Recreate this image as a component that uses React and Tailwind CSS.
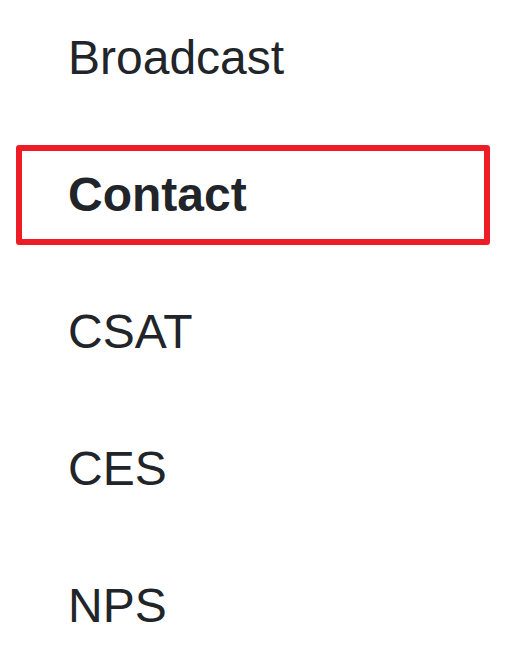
import React from "react";

const items = [
  { label: "Broadcast", active: false },
  { label: "Contact", active: true },
  { label: "CSAT", active: false },
  { label: "CES", active: false },
  { label: "NPS", active: false },
];

export default function App() {
  return (
    <div
      className="w-[532px] h-[655px] bg-white overflow-hidden pt-2"
      style={{ fontFamily: '"Liberation Sans", Arial, sans-serif' }}
    >
      <ul className="flex flex-col gap-[37px] ml-4 w-[474px]">
        {items.map((it) => (
          <li
            key={it.label}
            className={
              "h-[100px] flex items-center text-[48px] leading-none text-[#212529] " +
              (it.active
                ? "border-[6px] border-[#ee1d25] rounded-[3px] font-bold pl-[46px]"
                : "font-normal pl-[52px]")
            }
          >
            {it.label}
          </li>
        ))}
      </ul>
    </div>
  );
}
